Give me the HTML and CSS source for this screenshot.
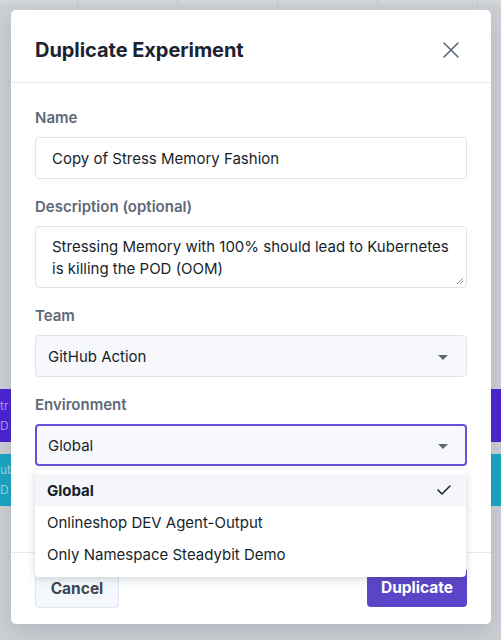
FILE: index.html
```html
<!DOCTYPE html>
<html lang="en">
<head>
<meta charset="utf-8">
<title>Duplicate Experiment</title>
<link rel="stylesheet" href="styles.css">
</head>
<body>
<div class="page">
  <div class="topbar">
    <div class="cell first"></div>
    <div class="cell"></div>
    <div class="cell"></div>
    <div class="cell"></div>
    <div class="cell"></div>
    <div class="cell last"></div>
  </div>
  <div class="band purple"><span>tr</span><span>D 3</span></div>
  <div class="band teal"><span>ub</span><span>D 3</span></div>
</div>

<div class="modal">
  <div class="modal-header">
    <h1 class="title">Duplicate Experiment</h1>
    <button class="close" aria-label="Close">
      <svg width="16" height="16" viewBox="0 0 16 16"><path d="M1 1L15 15M15 1L1 15" stroke="#5d6879" stroke-width="1.6" stroke-linecap="round" fill="none"/></svg>
    </button>
  </div>
  <div class="modal-body">
    <div class="field">
      <label class="label">Name</label>
      <div class="input">Copy of Stress Memory Fashion</div>
    </div>
    <div class="field">
      <label class="label">Description (optional)</label>
      <div class="textarea">Stressing Memory with 100% should lead to Kubernetes is killing the POD (OOM)
        <svg class="grip" width="8" height="8" viewBox="0 0 8 8"><path d="M7 1L1 7M7 4L4 7" stroke="#8a93a0" stroke-width="1" fill="none"/></svg>
      </div>
    </div>
    <div class="field">
      <label class="label">Team</label>
      <div class="select"><span>GitHub Action</span><span class="caret"></span></div>
    </div>
    <div class="field env">
      <label class="label">Environment</label>
      <div class="select focused"><span>Global</span><span class="caret"></span></div>
      <ul class="menu">
        <li class="option active"><span>Global</span>
          <svg width="14" height="10" viewBox="0 0 14 10"><path d="M1 5L5 9L13 1" stroke="#1d2532" stroke-width="1.6" fill="none" stroke-linecap="round" stroke-linejoin="round"/></svg>
        </li>
        <li class="option">Onlineshop DEV Agent-Output</li>
        <li class="option">Only Namespace Steadybit Demo</li>
      </ul>
    </div>
  </div>
  <div class="modal-footer">
    <button class="btn cancel">Cancel</button>
    <button class="btn primary">Duplicate</button>
  </div>
</div>
</body>
</html>
```
FILE: styles.css
```css
* { box-sizing: border-box; }
html, body { margin: 0; padding: 0; }
body {
  width: 501px;
  height: 640px;
  overflow: hidden;
  background: #cdd0d5;
  font-family: Inter, "Noto Sans", sans-serif;
  color: #1b2330;
  position: relative;
}
.page {
  display: flex;
  flex-direction: column;
}
.topbar {
  display: flex;
  height: 6px;
  background: #d3d6da;
  border-bottom: 1px solid #c9ccd1;
}
.cell { width: 100px; border-right: 1px solid #c3c6cb; flex: none; }
.cell.first { width: 78px; }
.cell.last { border-right: none; flex: 1; }
.band {
  height: 53px;
  display: flex;
  flex-direction: column;
  justify-content: center;
  gap: 6px;
  padding-left: 0;
  font-size: 12px;
  color: rgba(255,255,255,0.55);
  line-height: 14px;
}
.band.purple { margin-top: 383px; background: #4a22d4; }
.band.teal { margin-top: 12px; height: 52px; background: #19a5c4; }

.modal {
  position: absolute;
  left: 11px;
  top: 10px;
  width: 480px;
  height: 614px;
  background: #fff;
  border-radius: 5px;
  box-shadow: 0 8px 24px rgba(60, 70, 90, 0.18);
  display: flex;
  flex-direction: column;
}
.modal-header {
  height: 73px;
  display: flex;
  align-items: center;
  justify-content: space-between;
  padding: 0 32px 0 24px;
  border-bottom: 1px solid #e6ebf1;
}
.title {
  margin: 0;
  font-size: 20px;
  font-weight: 700;
  color: #1b2330;
  letter-spacing: -0.05px;
  padding-top: 7px;
}
.close {
  background: none;
  border: none;
  padding: 0;
  width: 16px;
  height: 16px;
  display: flex;
  margin-top: 7px;
}
.modal-body {
  padding: 24px 24px 0 24px;
  height: 469px;
  display: flex;
  flex-direction: column;
}
.field { display: flex; flex-direction: column; margin-bottom: 17px; }
.field.env { margin-bottom: 0; }
.label {
  font-size: 15px;
  font-weight: 600;
  color: #5d6879;
  line-height: 22px;
  margin-bottom: 8px;
}
.input, .textarea, .select {
  border: 1px solid #dfe5ee;
  border-radius: 4px;
  font-size: 15px;
  color: #171f2b;
  line-height: 22px;
}
.input {
  height: 42px;
  padding: 10px 16px 8px;
}
.textarea {
  height: 62px;
  padding: 9px 16px 7px;
  position: relative;
}
.grip { position: absolute; right: 2px; bottom: 2px; }
.select {
  height: 42px;
  padding: 10px 18px 8px 12px;
  background: #f6f8fb;
  display: flex;
  align-items: center;
  justify-content: space-between;
}
.select.focused {
  border: 2px solid #6b4fd8;
  padding: 9px 17px 7px 11px;
}
.caret {
  width: 0; height: 0;
  border-left: 5px solid transparent;
  border-right: 5px solid transparent;
  border-top: 5px solid #5d6879;
}
.env { position: relative; }
.menu {
  position: absolute;
  left: 0;
  right: 1px;
  top: 76px;
  margin: 0;
  padding: 4px 0 7px;
  list-style: none;
  background: #fff;
  border-radius: 4px;
  box-shadow: 0 2px 8px rgba(40, 50, 70, 0.2);
  z-index: 2;
}
.option {
  height: 32px;
  padding: 0 15px 0 12px;
  display: flex;
  align-items: center;
  justify-content: space-between;
  font-size: 15px;
  color: #171f2b;
}
.option.active { background: #f4f6fa; font-weight: 700; }
.modal-footer {
  border-top: 1px solid #e6ebf1;
  flex: 1;
  display: flex;
  justify-content: space-between;
  align-items: flex-start;
  padding: 15px 24px 0;
}
.btn {
  height: 40px;
  border-radius: 4px;
  font-family: inherit;
  font-size: 15.5px;
  font-weight: 700;
}
.cancel {
  width: 84px;
  background: #f4f7fb;
  border: 1px solid #dfe5ee;
  color: #3c4656;
}
.primary {
  width: 100px;
  height: 39px;
  background: #5b45c8;
  border: none;
  color: #fff;
}
```
